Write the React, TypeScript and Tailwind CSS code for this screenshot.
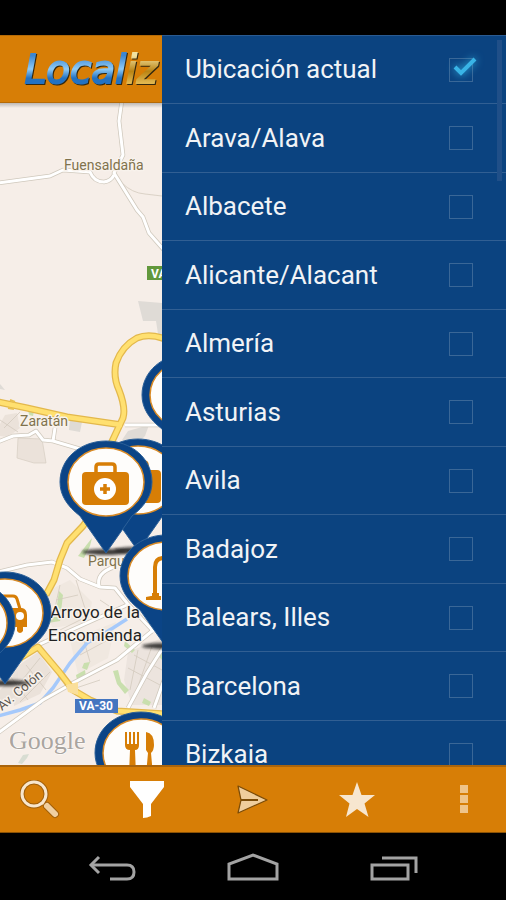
import React, { useState } from "react";

const PROVINCES = [
  "Ubicación actual",
  "Arava/Alava",
  "Albacete",
  "Alicante/Alacant",
  "Almería",
  "Asturias",
  "Avila",
  "Badajoz",
  "Balears, Illes",
  "Barcelona",
  "Bizkaia",
];

const WHITE_ROADS = [
  "M122 100L119 121L123 155L114 173L137 210L143 217L149 233L164 250",
  "M-2 183L50 176L63 170L90 172Q94 182 104 182Q111 181 114 175",
  "M125 425L164 425",
  "M-2 442L13 436L29 435L36 431L43 440L53 441L80 449",
  "M53 441L55 428",
  "M-2 572L27 565L52 562L67 568L80 579L100 587L115 588L127 603L154 632",
  "M99 586Q96 573 114 567",
  "M20 654L38 645L127 605",
  "M-2 733L43 700L73 683L117 660L152 631",
  "M164 646L147 673L128 708",
  "M164 680L154 708",
];

const YELLOW_ROADS = [
  "M165 339Q149 333 137 338Q122 346 116 363Q113 377 119 390Q126 408 123 418L108 450",
  "M-2 402L27 408L67 417L122 425",
  "M90 516L83 526L67 543L60 560L54 580L46 595",
  "M20 658L38 647L60 673L73 690L90 700L117 711L164 714",
];

const Pin: React.FC<{ x: number; y: number; children?: React.ReactNode }> = ({ x, y, children }) => (
  <g transform={`translate(${x} ${y})`}>
    <ellipse cx="0" cy="70" rx="24" ry="3" fill="#111" opacity="0.8" filter="url(#soft)" />
    <path
      d="M0 71L-26 34C-39 24 -46 13 -46 0C-46 -24 -25 -41 0 -41C25 -41 46 -24 46 0C46 13 39 24 26 34Z"
      fill="#0b4486"
      stroke="#2c6098"
      strokeWidth="1"
    />
    <ellipse rx="38" ry="34" fill="#fefdfb" stroke="#d98a25" strokeWidth="1.5" />
    {children}
  </g>
);

const Briefcase: React.FC = () => (
  <g>
    <path d="M-10 -10V-15Q-10 -18 -7 -18H6Q9 -18 9 -15V-10" fill="none" stroke="#d77e06" strokeWidth="3.5" />
    <rect x="-24" y="-10" width="47" height="33" rx="4" fill="#d77e06" />
    <circle cx="-1" cy="7" r="11" fill="#fff" />
    <path d="M-1 2V12M-6 7H4" stroke="#d77e06" strokeWidth="3.5" />
  </g>
);

const MapView: React.FC = () => (
  <svg
    className="block h-full w-full bg-[#f6eee8]"
    viewBox="0 103 162 662"
    preserveAspectRatio="xMinYMin slice"
    fontFamily="Roboto, sans-serif"
  >
    <defs>
      <filter id="soft" x="-20%" y="-100%" width="140%" height="300%">
        <feGaussianBlur stdDeviation="1.5" />
      </filter>
      <linearGradient id="headerShade" x1="0" y1="0" x2="0" y2="1">
        <stop offset="0" stopColor="#777" stopOpacity="0.45" />
        <stop offset="1" stopColor="#777" stopOpacity="0" />
      </linearGradient>
    </defs>

    {/* Built-up areas */}
    <g fill="#dfdbd6">
      <path d="M138 301L162 303V334H158L156 321H143Z" />
      <path d="M0 384L5 390L0 389Z" />
      <path d="M70 419L82 422L80 432L69 430Z" />
      <path d="M128 431L149 425L145 436L138 443L122 440Z" />
      <path d="M5 415L17 413L20 428L8 437L0 436V424Z" fill="#ebe2da" />
      <path d="M18 438L42 439L46 463L34 463L17 458Z" fill="#ebe2da" stroke="#d5cdc2" strokeWidth="0.7" />
      <path d="M50 590L70 580L92 602L88 622L53 628L47 618Z" fill="#f0e8e0" />
      <path d="M70 640L116 622L108 658L78 674Z" fill="#f0e8e0" />
      <path d="M128 652L162 638V705H132L124 680Z" fill="#ece4de" />
      <path d="M12 670L38 652L52 672L40 694L14 706Z" fill="#ebe2da" />
      <path d="M-2 692L18 672V694L-2 712Z" fill="#e8e0d8" />
    </g>

    {/* Parks */}
    <g fill="#c9dfae">
      <path d="M78 556L88 543L92 538L90 546L84 558Z" />
      <path d="M59 591L63 595L61 612L57 605Z" />
      <path d="M49 617L62 614L60 621L48 623Z" />
      <path d="M76 675L85 670L86 677L77 680Z" />
      <path d="M84 663L90 662L87 670L82 668Z" />
      <path d="M113 671L118 670L121 682L129 690L125 694L117 684Z" />
      <path d="M144 698L151 702L149 706L142 703Z" />
      <path d="M125 641L135 650L132 653L124 646Z" />
      <path d="M28 410L34 411L33 416L29 415Z" />
      <path d="M19 658L25 656L22 662Z" />
      <path d="M157 654L162 652V660Z" />
      <path d="M18 763L23 755L29 754L27 758L22 764Z" fill="#d8ddd2" />
    </g>

    {/* Side streets */}
    <g fill="none" stroke="#d3cabe" strokeWidth="0.8">
      <path d="M122 183Q132 193 145 194L162 196" />
      <path d="M14 690L40 658M20 702L50 672M26 665L46 690M10 676L28 700" />
      <path d="M134 655L162 670M128 668L160 685M138 650L130 690M152 646L136 692" />
      <path d="M56 600L78 595M60 630L84 618M80 655L108 640M82 634L90 662" />
      <path d="M4 428L20 412M0 420L18 432" />
      <path d="M60 585L52 622M76 580L88 618M100 600L118 612M70 690L100 680" />
    </g>

    <path d="M-2 716L20 710L40 703L53 688L70 663L87 643L113 628L127 619" fill="none" stroke="#a5c9fb" strokeWidth="3.5" />

    <g fill="none" strokeLinejoin="round">
      {WHITE_ROADS.map((d) => (
        <path key={d} d={d} stroke="#cfc8bc" strokeWidth="4.5" />
      ))}
      {WHITE_ROADS.map((d) => (
        <path key={d} d={d} stroke="#fff" strokeWidth="3" />
      ))}
      {YELLOW_ROADS.map((d) => (
        <path key={d} d={d} stroke="#e3b84c" strokeWidth="7" />
      ))}
      {YELLOW_ROADS.map((d) => (
        <path key={d} d={d} stroke="#ffe070" strokeWidth="4.5" />
      ))}
    </g>
    <path d="M10 400L15 402M8 408L14 409" stroke="#e9c152" strokeWidth="2" />
    <path d="M66 685L78 682V695L68 692Z" fill="#fadf9a" />

    <rect x="147" y="266" width="40" height="14" fill="#62983c" />
    <text x="151" y="278" fontSize="12" fontWeight="700" fill="#fff">VA</text>

    {/* Place names */}
    <g stroke="#f8f2ec" strokeWidth="3" strokeLinejoin="round" paintOrder="stroke" fill="#80724d">
      <text x="64" y="170" fontSize="14">Fuensaldaña</text>
      <text x="20" y="426" fontSize="14">Zaratán</text>
      <text x="88" y="566" fontSize="14">Parqu</text>
      <text x="50" y="618" fontSize="17" fill="#222">Arroyo de la</text>
      <text x="48" y="641" fontSize="17" fill="#222">Encomienda</text>
      <text x="2" y="711" fontSize="13" fill="#5c564e" transform="rotate(-40 2 711)">Av. Colón</text>
    </g>

    <rect x="75" y="699" width="43" height="14" fill="#4475c0" />
    <text x="79" y="710" fontSize="12" fontWeight="700" fill="#fff">VA-30</text>
    <text x="9" y="749" fontSize="26" fontFamily="Liberation Serif, serif" fill="#aaa5a0" stroke="#fff" strokeWidth="1" paintOrder="stroke">
      Google
    </text>

    {/* Markers */}
    <Pin x={188} y={395} />
    <Pin x={138} y={480}>
      <Briefcase />
    </Pin>
    <Pin x={106} y={482}>
      <Briefcase />
    </Pin>
    <Pin x={166} y={576}>
      <path d="M-11 22V-9Q-11 -18 -2 -18Q6 -18 6 -9" fill="none" stroke="#d77e06" strokeWidth="4" />
      <path d="M-15 20H-14V17H-7V20H-5V24H-20V21Z" fill="#d77e06" />
    </Pin>
    <Pin x={5} y={613}>
      <path d="M-14 -17H8Q11 -17 12 -14L15 -4" fill="none" stroke="#d77e06" strokeWidth="3" />
      <path d="M-24 -5H17Q22 -4 22 2V14H18V18Q15 22 12 18V14H-24Z" fill="#d77e06" />
      <circle cx="15" cy="3" r="4" fill="#fff" />
    </Pin>
    <Pin x={-31} y={623} />
    <Pin x={141} y={753}>
      <path d="M-16 -21V-8Q-16 -3 -11 -3L-12 22H-5L-6 -3Q-2 -3 -2 -8V-21H-4V-9H-6V-21H-8V-9H-10V-21H-12V-9H-14V-21Z" fill="#d77e06" />
      <path d="M5 -21Q13 -20 13 -8Q13 -3 10 0L12 22H5L7 0L5 -3Z" fill="#d77e06" />
    </Pin>

    <rect x="0" y="103" width="900" height="5" fill="url(#headerShade)" />
  </svg>
);

const Logo: React.FC = () => (
  <svg
    className="block h-full w-56 shrink-0 drop-shadow-[1px_1px_0_#33280f]"
    viewBox="0 0 224 68"
    fontFamily="DejaVu Sans, sans-serif"
    fontStyle="italic"
    fontSize="40"
  >
    <defs>
      <linearGradient id="blueMetal" x1="0" y1="0" x2="0" y2="1">
        <stop offset="0.2" stopColor="#3c86d0" />
        <stop offset="0.5" stopColor="#8fcbf6" />
        <stop offset="0.7" stopColor="#2372c2" />
      </linearGradient>
      <linearGradient id="goldMetal" x1="0" y1="0" x2="0" y2="1">
        <stop offset="0.2" stopColor="#f2e2a0" />
        <stop offset="0.55" stopColor="#b98313" />
        <stop offset="0.8" stopColor="#e0b64e" />
      </linearGradient>
    </defs>
    <text x="22" y="48" strokeWidth="2">
      <tspan fill="url(#blueMetal)" stroke="url(#blueMetal)">Local</tspan>
      <tspan fill="url(#goldMetal)" stroke="url(#goldMetal)">iz</tspan>
    </text>
  </svg>
);

const App: React.FC = () => {
  const [selected, setSelected] = useState<string[]>(["Ubicación actual"]);

  const toggle = (name: string) => {
    setSelected(selected.includes(name) ? selected.filter((n) => n !== name) : [...selected, name]);
  };

  return (
    <div className="flex h-screen flex-col overflow-hidden bg-black font-['Roboto',sans-serif]">
      {/* Status bar */}
      <div className="h-[35px] shrink-0" />

      <main className="flex min-h-0 flex-1">
        <section className="flex min-w-0 flex-1 flex-col overflow-hidden">
          <header className="h-[68px] shrink-0 overflow-hidden border-y border-[#b56a06] bg-[#d77e06]">
            <Logo />
          </header>
          <div className="min-h-0 flex-1">
            <MapView />
          </div>
        </section>

        {/* Province filter */}
        <aside className="relative w-[68%] overflow-hidden border-t border-[#2a5b92] bg-[#0b4380]">
          <ul>
            {PROVINCES.map((name) => (
              <li key={name} className="border-b border-[#315f93] odd:h-[68px] even:h-[69px]">
                <label className="flex h-full items-center justify-between pr-[33px] pl-[23px] text-[26px] text-[#f1f3f6]">
                  {name}
                  <span className="relative size-6">
                    <input
                      type="checkbox"
                      className="peer block size-6 appearance-none border border-[#3a6797]"
                      checked={selected.includes(name)}
                      onChange={() => toggle(name)}
                    />
                    <svg
                      className="pointer-events-none absolute -top-1 left-0 hidden h-7 w-8 drop-shadow-[0_0_4px_#33b5e5] peer-checked:block"
                      viewBox="0 0 32 28"
                      fill="none"
                      stroke="#39b4e6"
                      strokeWidth="4"
                    >
                      <path d="M6 13L12 19L26 5" />
                    </svg>
                  </span>
                </label>
              </li>
            ))}
          </ul>
          <div className="absolute top-1 right-1 h-[141px] w-[5px] bg-[#204f88]" />
        </aside>
      </main>

      {/* Toolbar */}
      <footer className="flex h-[68px] shrink-0 items-center justify-between border-t-2 border-b border-t-[#a9640c] border-b-[#8a5206] bg-[#d77e06] pr-[22px] pl-5">
        <button aria-label="Buscar">
          <svg className="size-10" viewBox="0 0 40 40" fill="none">
            <circle cx="14" cy="14" r="12" stroke="#a05f0a" strokeWidth="5" />
            <path d="M22 22L26 26" stroke="#f6dfbe" strokeWidth="3" />
            <path d="M27 26L35 34" stroke="#a05f0a" strokeWidth="8" strokeLinecap="round" />
            <path d="M27 26L35 34" stroke="#f0cfa0" strokeWidth="6" strokeLinecap="round" />
            <circle cx="14" cy="14" r="12" stroke="#f8e6cc" strokeWidth="3" />
          </svg>
        </button>
        <button aria-label="Filtrar">
          <svg className="size-10" viewBox="0 0 40 40" fill="#fff">
            <path d="M4 1H38V7L25 24V36Q21 38 17 38V24L4 7Z" />
          </svg>
        </button>
        <button aria-label="Ir">
          <svg className="size-10" viewBox="0 0 40 40" fill="#efcd9c" stroke="#7a4b08" strokeLinejoin="round">
            <path d="M6 6L35 20L6 33L9 20Z" strokeWidth="1.200" />
            <path d="M9 20H26" strokeWidth="2" />
          </svg>
        </button>
        <button aria-label="Favoritos">
          <svg className="size-10" viewBox="0 0 40 40" fill="#f7e6cf">
            <path d="M19 2L23.500 15H37L26.500 23.500L30.500 37L19 29L8 37L11.500 23.500L1 15H14.500Z" />
          </svg>
        </button>
        <button aria-label="Más opciones">
          <svg className="size-10" viewBox="0 0 40 40" fill="#efc48a">
            <path d="M16 5H24V13H16ZM16 15H24V23H16ZM16 25H24V33H16Z" />
          </svg>
        </button>
      </footer>

      {/* System navigation */}
      <nav className="flex h-[67px] shrink-0 items-center justify-between px-[88px]">
        <button aria-label="Atrás">
          <svg className="h-7 w-12" viewBox="0 0 48 28" fill="none" stroke="#a3a3a3" strokeWidth="3">
            <path d="M4 12H39Q46 12 46 19Q46 26 39 26H22" />
            <path d="M11 4L3 12L11 20" />
          </svg>
        </button>
        <button aria-label="Inicio">
          <svg className="h-7 w-[52px]" viewBox="0 0 52 28" fill="none" stroke="#a3a3a3" strokeWidth="3">
            <path d="M2 26V11L26 2L50 11V26Z" />
          </svg>
        </button>
        <button aria-label="Recientes">
          <svg className="h-7 w-12" viewBox="0 0 48 28" fill="none" stroke="#a3a3a3" strokeWidth="3">
            <path d="M2 12H38V26H2Z" />
            <path d="M12 5H46V20" />
          </svg>
        </button>
      </nav>
    </div>
  );
};

export default App;
